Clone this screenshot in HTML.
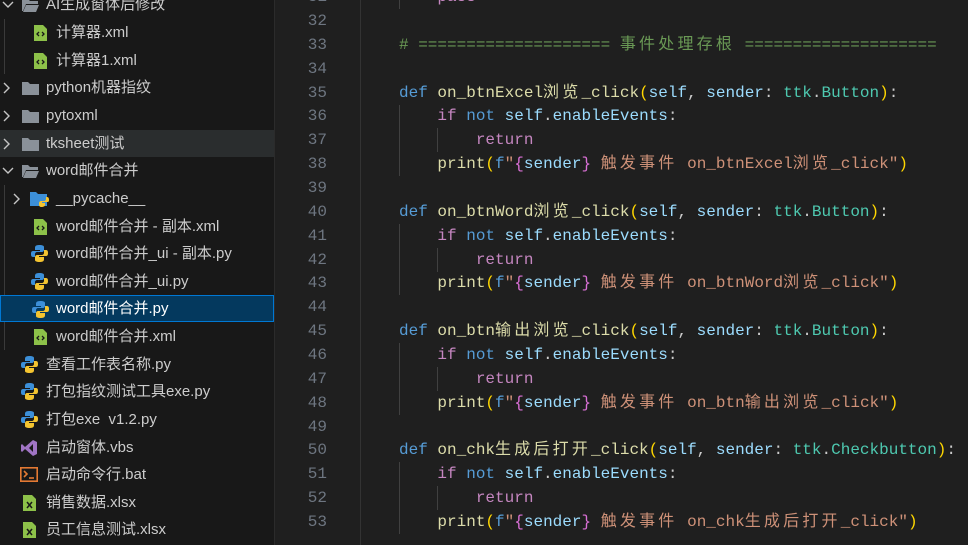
<!DOCTYPE html><html><head><meta charset="utf-8"><style>
*{margin:0;padding:0;box-sizing:border-box}
body{width:968px;height:545px;overflow:hidden;background:#1f1f1f;position:relative;font-family:"Liberation Sans","Noto Sans CJK SC",sans-serif}
#side{position:absolute;left:0;top:0;width:275px;height:545px;background:#181818;border-right:1px solid #2b2b2b}
.r{position:absolute;left:0;width:274px;height:27px;color:#cccccc;font-size:15px;line-height:27px;white-space:nowrap}
.r span.t{position:absolute}
.r svg{position:absolute}
.sel{background:#04395e;border:1px solid #0078d4}
.hov{background:#2a2d2e}
.g{position:absolute;width:1px;background:#3a3a3a}
#code{position:absolute;left:276px;top:0;right:0;height:545px;font-family:"Liberation Mono","Noto Sans CJK SC",monospace;font-size:16px}
.l{position:absolute;left:0;height:24px;line-height:24px;white-space:pre;width:700px}
.n{position:absolute;right:calc(100% - 51px);color:#6e7681;width:50px;text-align:right}
.c{position:absolute;left:123px;color:#cccccc}
.k{color:#569cd6}.fn{color:#dcdcaa}.v{color:#9cdcfe}.p{color:#c586c0}.ty{color:#4ec9b0}.s{color:#ce9178}.cm{color:#6a9955}.y{color:#ffd700}.pk{color:#da70d6}
.z{letter-spacing:3.2px}
.ig{position:absolute;width:1px;background:#404040}
</style></head><body>
<div id="side">
<div class="g" style="left:4px;top:19px;height:55px"></div>
<div class="g" style="left:4px;top:185px;height:165px"></div>
</div>
<div id="code"></div>
<script>
const side=document.getElementById('side');
const chev=(x)=>`<svg style="left:${x}px;top:8px" width="10" height="12" viewBox="0 0 10 12"><path d="M2 1l5 5-5 5" stroke="#c5c5c5" stroke-width="1.4" fill="none"/></svg>`;
const chevd=(x)=>`<svg style="left:${x}px;top:9px" width="12" height="10" viewBox="0 0 12 10"><path d="M1 2l5 5 5-5" stroke="#c5c5c5" stroke-width="1.4" fill="none"/></svg>`;
const fold=(x)=>`<svg style="left:${x}px;top:7px" width="17" height="14" viewBox="0 0 17 14"><path d="M0 1h6l2 2h9v11H0z" fill="#8a9199"/></svg>`;
const foldo=(x)=>`<svg style="left:${x}px;top:7px" width="17" height="14" viewBox="0 0 17 14"><path d="M0 1h6l2 2h8v3H4L1 13H0z" fill="#8a9199"/><path d="M4 7h13l-3 7H1z" fill="#8a9199"/></svg>`;
const xml=(x)=>`<svg style="left:${x}px;top:6px" width="13" height="16" viewBox="0 0 13 16"><path d="M0 0h9l4 4v12H0z" fill="#8dc149"/><path d="M5 7l-2 2 2 2M8 7l2 2-2 2" stroke="#181818" stroke-width="1.3" fill="none"/></svg>`;
const xls=(x)=>`<svg style="left:${x}px;top:6px" width="13" height="16" viewBox="0 0 13 16"><path d="M0 0h9l4 4v12H0z" fill="#8dc149"/><path d="M4 7l5 6M9 7l-5 6" stroke="#181818" stroke-width="1.5"/></svg>`;
const py=(x)=>`<svg style="left:${x}px;top:5px" width="17" height="17" viewBox="0 0 17 17"><path d="M8 0C4 0 4 2 4 3v2h5v1H2C0 6 0 8 0 9s0 3 2 3h2V9c0-1 1-2 2-2h5c1 0 2-1 2-2V2c0-1-1-2-5-2z" fill="#3c8fd8"/><path d="M9 17c4 0 4-2 4-3v-2H8v-1h7c2 0 2-2 2-3s0-3-2-3h-2v3c0 1-1 2-2 2H6c-1 0-2 1-2 2v3c0 1 1 2 5 2z" fill="#f4c430"/></svg>`;
const pyc=(x)=>`<svg style="left:${x}px;top:6px" width="20" height="16" viewBox="0 0 20 16"><path d="M0 1h6l2 2h9v12H0z" fill="#3c8fd8"/><path d="M11 16c3 0 4-1 4-2v-2h-3v-1h5c2 0 2-1 2-2s0-3-2-3h-1v2c0 1-1 2-2 2h-3c-1 0-2 1-2 2v2c0 1 1 2 2 2z" fill="#f4c430"/></svg>`;
const vbs=(x)=>`<svg style="left:${x}px;top:6px" width="16" height="16" viewBox="0 0 16 16"><path d="M12 0l4 2v12l-4 2L4 9l-3 3-1-1V5l1-1 3 3zM12 4L8 8l4 4z" fill="#a074c4"/></svg>`;
const bat=(x)=>`<svg style="left:${x}px;top:6px" width="18" height="15" viewBox="0 0 18 15"><rect x="0.8" y="0.8" width="16.4" height="13.4" fill="none" stroke="#e37933" stroke-width="1.6"/><path d="M4 4l3 3-3 3" stroke="#e37933" stroke-width="1.6" fill="none"/><path d="M9 11h5" stroke="#e37933" stroke-width="1.6"/></svg>`;
const rows=[
[-9,[chevd(2),foldo(22)],46,'AI生成窗体后修改'],
[19,[xml(34)],56,'计算器.xml'],
[47,[xml(34)],56,'计算器1.xml'],
[74,[chev(2),fold(22)],46,'python机器指纹'],
[102,[chev(2),fold(22)],46,'pytoxml'],
[130,[chev(2),fold(22)],46,'tksheet测试','hov'],
[157,[chevd(2),foldo(22)],46,'word邮件合并'],
[185,[chev(12),pyc(30)],56,'__pycache__'],
[213,[xml(34)],56,'word邮件合并 - 副本.xml'],
[240,[py(31)],56,'word邮件合并_ui - 副本.py'],
[268,[py(31)],56,'word邮件合并_ui.py'],
[295,[py(31)],56,'word邮件合并.py','sel'],
[323,[xml(34)],56,'word邮件合并.xml'],
[351,[py(21)],46,'查看工作表名称.py'],
[378,[py(21)],46,'打包指纹测试工具exe.py'],
[406,[py(21)],46,'打包exe&nbsp; v1.2.py'],
[434,[vbs(21)],46,'启动窗体.vbs'],
[461,[bat(20)],46,'启动命令行.bat'],
[489,[xls(23)],46,'销售数据.xlsx'],
[516,[xls(23)],46,'员工信息测试.xlsx']];
let h='';
for(const r of rows){h+=`<div class="r ${r[4]||''}" style="top:${r[0]}px">${r[1].join('')}<span class="t" style="left:${r[2]-(r[4]=='sel'?1:0)}px;top:${r[4]=='sel'?-1:0}px;${r[4]=='sel'?'color:#fff':''}">${r[3]}</span></div>`}
side.insertAdjacentHTML('beforeend',h);
const Z=s=>`<span class="z">${s}</span>`;
const sig=(name,cls)=>`<span class="k">def</span> <span class="fn">${name}</span><span class="y">(</span><span class="v">self</span>, <span class="v">sender</span>: <span class="ty">ttk</span>.<span class="ty">${cls}</span><span class="y">)</span>:`;
const ifl=`    <span class="p">if</span> <span class="k">not</span> <span class="v">self</span>.<span class="v">enableEvents</span>:`;
const ret=`        <span class="p">return</span>`;
const pr=n=>`    <span class="fn">print</span><span class="y">(</span><span class="k">f</span><span class="s">"</span><span class="pk">{</span><span class="v">sender</span><span class="pk">}</span><span class="s"> ${Z('触发事件')} ${n}"</span><span class="y">)</span>`;
const L={31:`    <span class="p">pass</span>`,32:'',33:`<span class="cm"># ==================== ${Z('事件处理存根')} ====================</span>`,34:'',
35:sig(`on_btnExcel${Z('浏览')}_click`,'Button'),36:ifl,37:ret,38:pr(`on_btnExcel${Z('浏览')}_click`),39:'',
40:sig(`on_btnWord${Z('浏览')}_click`,'Button'),41:ifl,42:ret,43:pr(`on_btnWord${Z('浏览')}_click`),44:'',
45:sig(`on_btn${Z('输出浏览')}_click`,'Button'),46:ifl,47:ret,48:pr(`on_btn${Z('输出浏览')}_click`),49:'',
50:sig(`on_chk${Z('生成后打开')}_click`,'Checkbutton'),51:ifl,52:ret,53:pr(`on_chk${Z('生成后打开')}_click`)};
let c='';
for(let i=31;i<=53;i++){const t=21+(i-32)*23.86-12;c+=`<div class="l" style="top:${t}px"><span class="n">${i}</span><span class="c">${L[i]}</span></div>`}
c+=`<div class="ig" style="left:84px;top:0;height:545px;background:#333"></div>`;
c+=`<div class="ig" style="left:123px;top:0;height:9px"></div>`;
for(const s of [35,40,45,50]){const t=21+(s-32)*23.86+12;c+=`<div class="ig" style="left:123px;top:${t}px;height:${23.86*3}px"></div><div class="ig" style="left:161px;top:${t+23.86}px;height:23.86px"></div>`}
document.getElementById('code').innerHTML=c;
</script>
</body></html>
